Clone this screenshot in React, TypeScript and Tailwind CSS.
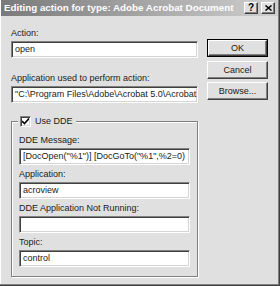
import React from "react";

const sunken =
  "bg-white border-t border-l border-b border-r border-t-[#808080] border-l-[#808080] border-b-white border-r-white shadow-[inset_1px_1px_0_#404040,inset_-1px_-1px_0_#d4d4d4]";

const raised =
  "bg-[#e0e0e0] border border-t-white border-l-white border-b-[#404040] border-r-[#404040] shadow-[inset_-1px_-1px_0_#808080]";

function Field({ label, value, top }: { label: string; value: string; top: string }) {
  return (
    <div className={top}>
      <div className="h-[13px] leading-[13px]">{label}</div>
      <div className={`${sunken} h-[17px] mt-[1px] px-[3px] leading-[15px] whitespace-nowrap overflow-hidden`}>
        {value}
      </div>
    </div>
  );
}

function Btn({ label, def, top }: { label: string; def?: boolean; top?: string }) {
  return (
    <div className={`${top ?? ""} ${def ? "border border-black" : ""}`}>
      <div
        className={`${raised} ${def ? "h-[16px]" : "h-[18px]"} flex items-center justify-center leading-none`}
      >
        {label}
      </div>
    </div>
  );
}

export default function App() {
  return (
    <div
      className="w-[280px] h-[286px] bg-[#e0e0e0] text-[9px] text-[#1a1a1a] relative overflow-hidden border-r border-b border-r-[#404040] border-b-[#404040] shadow-[inset_-1px_-1px_0_#808080,inset_1px_0_0_white]"
      style={{ fontFamily: '"Liberation Sans", Arial, sans-serif' }}
    >
      {/* Title bar */}
      <div className="h-[16px] mx-[1px] bg-gradient-to-r from-[#7a7a7a] to-[#d0d0d0] flex items-center pl-[3px] pr-[3px]">
        <span className="text-white font-bold text-[9.8px] leading-none flex-1 whitespace-nowrap">
          Editing action for type: Adobe Acrobat Document
        </span>
        <div className={`${raised} w-[14px] h-[12px] flex items-center justify-center font-bold text-black text-[10px] leading-none`}>
          ?
        </div>
        <div className={`${raised} w-[14px] h-[12px] ml-[3px] flex items-center justify-center`}>
          <svg width="7" height="6" viewBox="0 0 7 6">
            <path d="M0.5 0.5 L6.5 5.5 M6.5 0.5 L0.5 5.5" stroke="black" strokeWidth="1.5" />
          </svg>
        </div>
      </div>

      <div className="flex">
        {/* Left column */}
        <div className="ml-[11px] w-[187px]">
          <Field label="Action:" value="open" top="mt-[11px]" />
          <Field
            label="Application used to perform action:"
            value={'"C:\\Program Files\\Adobe\\Acrobat 5.0\\Acrobat'}
            top="mt-[14px]"
          />

          {/* DDE group */}
          <div className="relative mt-[18px] h-[156px] border border-[#808080] shadow-[inset_1px_1px_0_white,1px_1px_0_white]">
            <div className="absolute -top-[7px] left-[6px] bg-[#e0e0e0] flex items-center pr-[3px] pl-[2px]">
              <div className={`${sunken} w-[11px] h-[11px] flex items-center justify-center`}>
                <svg width="7" height="7" viewBox="0 0 7 7">
                  <path d="M0 3 L2.5 5.5 L7 0.5" stroke="black" strokeWidth="1.6" fill="none" />
                </svg>
              </div>
              <span className="ml-[4px] leading-[13px]">Use DDE</span>
            </div>
            <div className="px-[7px]">
              <Field
                label="DDE Message:"
                value={'[DocOpen("%1")] [DocGoTo("%1",%2=0)'}
                top="mt-[12px]"
              />
              <Field label="Application:" value="acroview" top="mt-[3px]" />
              <Field label="DDE Application Not Running:" value="" top="mt-[3px]" />
              <Field label="Topic:" value="control" top="mt-[3px]" />
            </div>
          </div>
        </div>

        {/* Right column */}
        <div className="ml-[9px] w-[61px]">
          <Btn label="OK" def top="mt-[23px]" />
          <Btn label="Cancel" top="mt-[4px]" />
          <Btn label="Browse..." top="mt-[3px]" />
        </div>
      </div>
    </div>
  );
}
